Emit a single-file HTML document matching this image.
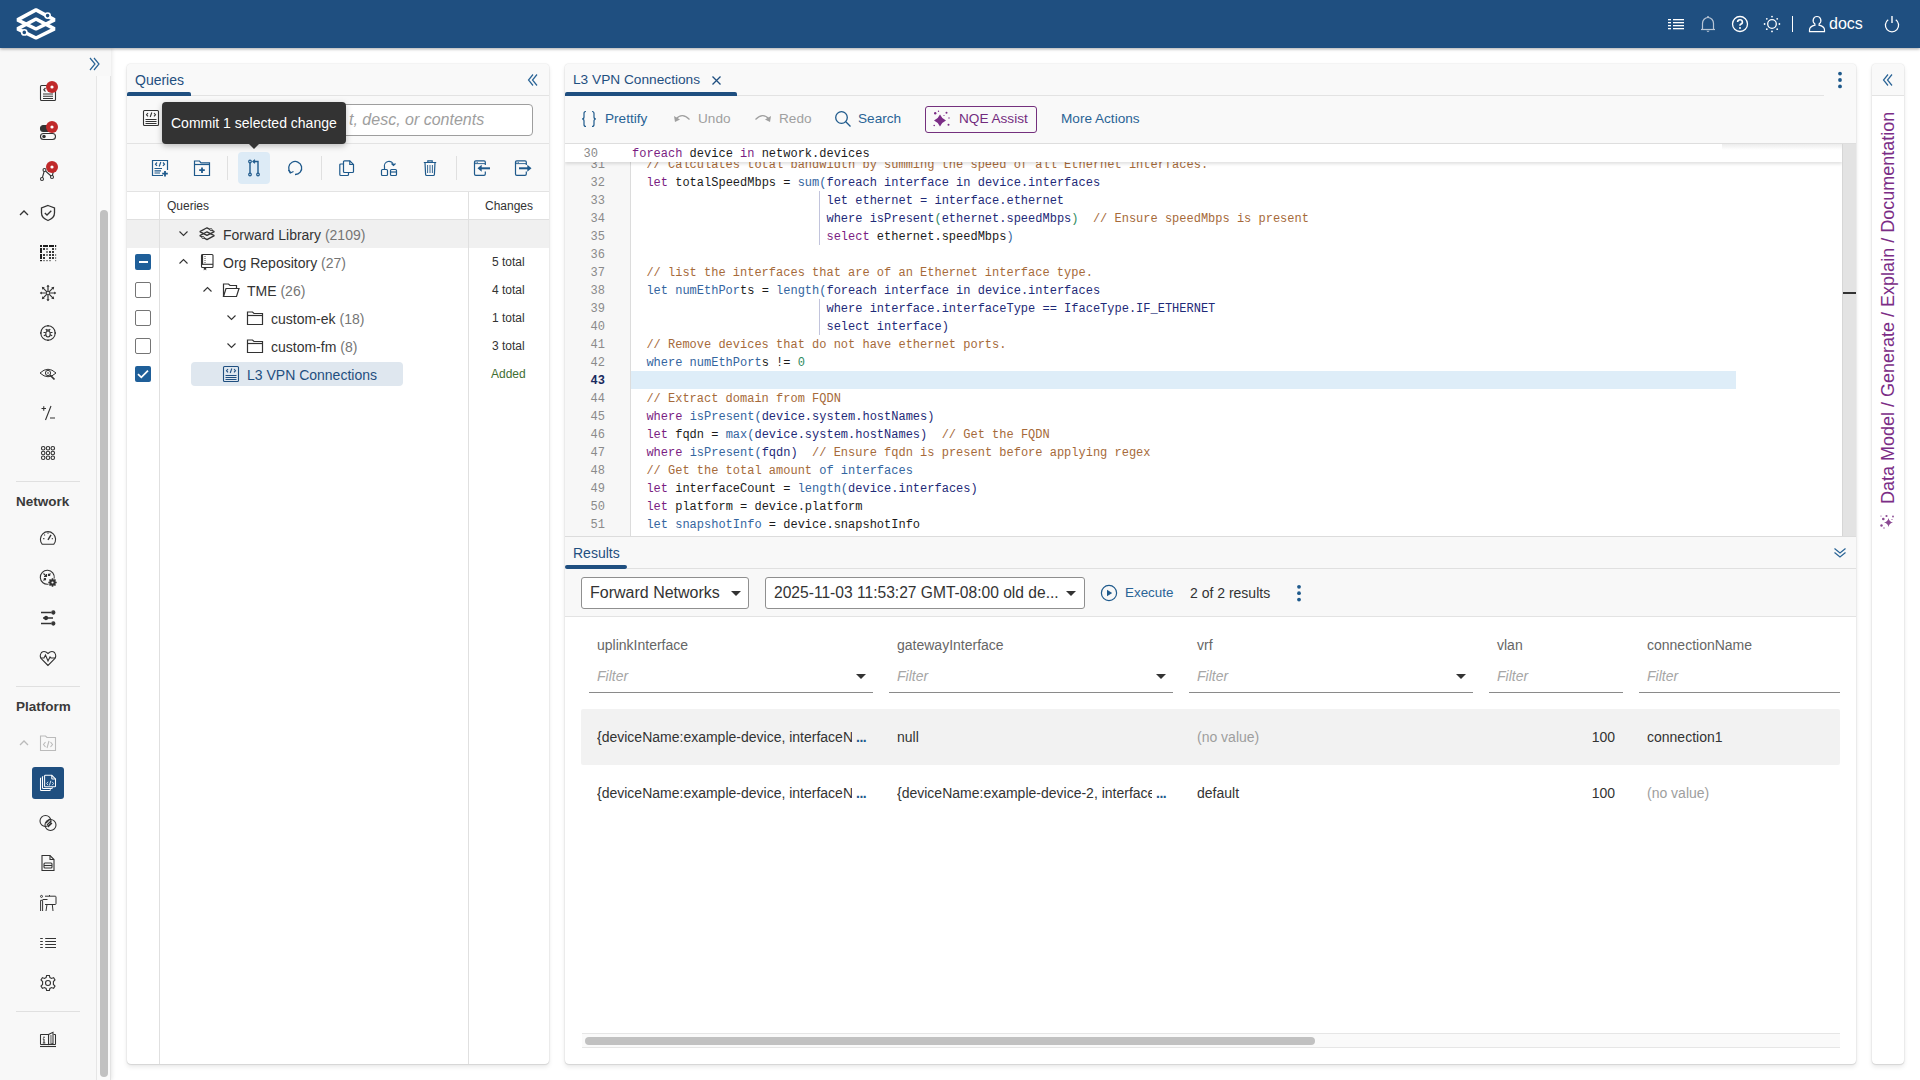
<!DOCTYPE html>
<html><head><meta charset="utf-8">
<style>
*{box-sizing:border-box;margin:0;padding:0}
html,body{width:1920px;height:1080px;overflow:hidden;background:#fff;font-family:"Liberation Sans",sans-serif;color:#333}
.abs{position:absolute}
svg{display:block}
#hdr{position:absolute;left:0;top:0;width:1920px;height:48px;background:#1f4f80;box-shadow:0 1px 3px rgba(0,0,0,.35);z-index:5}
#side{position:absolute;left:0;top:48px;width:111px;height:1032px;background:#f8f8f8;box-shadow:1px 0 4px rgba(0,0,0,.10)}
.panel{position:absolute;background:#fff;border-radius:4px;box-shadow:0 0 1.5px rgba(0,0,0,.22),0 1px 1px rgba(0,0,0,.06),0 3px 5px rgba(0,0,0,.09);overflow:hidden}
.tabtxt{position:absolute;font-size:14px;color:#1f4f80;line-height:16px}
.ind{position:absolute;height:4px;background:#1f4f80;border-radius:2px 2px 0 0}
.hline{position:absolute;height:1px;background:#e0e0e0}
.vline{position:absolute;width:1px;background:#e0e0e0}
.code{font-family:"Liberation Mono",monospace;font-size:12px;line-height:18px;white-space:pre;color:#1b1b1b;margin-top:1px}
.k{color:#7a1d82}.v{color:#1e2a78}.c{color:#a66a3a}.n{color:#2e8a5e}.m{color:#3465a0}
</style></head><body>

<!-- HEADER -->
<div id="hdr">
  <svg class="abs" style="left:14px;top:6px" width="44" height="36" viewBox="14 6 44 36">
    <g fill="none" stroke="#fff" stroke-width="3.6" stroke-linejoin="bevel">
      <path d="M17.5 19.8 L36 9.8 L54.5 19.8 L36 29 Z"/>
      <path d="M17.5 28.8 L36 19 L54.5 28.8 L36 38 Z"/>
    </g>
    <circle cx="47.6" cy="15.6" r="2.6" fill="#1f4f80" stroke="#fff" stroke-width="1.6"/>
    <circle cx="24.3" cy="32.4" r="2.6" fill="#1f4f80" stroke="#fff" stroke-width="1.6"/>
  </svg>

  <!-- list icon -->
  <svg class="abs" style="left:1667px;top:18px" width="18" height="12" viewBox="0 0 18 12">
    <g fill="#fff"><rect x="1" y="1" width="3" height="1.3"/><rect x="6" y="1" width="11" height="1.3"/>
    <rect x="1" y="4" width="3" height="1.3"/><rect x="6" y="4" width="11" height="1.3"/>
    <rect x="1" y="7" width="3" height="1.3"/><rect x="6" y="7" width="11" height="1.3"/>
    <rect x="1" y="10" width="3" height="1.3"/><rect x="6" y="10" width="11" height="1.3"/></g>
  </svg>
  <!-- bell -->
  <svg class="abs" style="left:1700px;top:15px" width="16" height="18" viewBox="0 0 16 18">
    <g fill="none" stroke="#b9c6d6" stroke-width="1.2"><path d="M2.5 14.5 V8.5 A5.5 6 0 0 1 13.5 8.5 V14.5"/><path d="M1 14.5 H15"/></g>
    <circle cx="8" cy="2" r="1" fill="#b9c6d6"/><path d="M6.3 15.8 H9.7 L8 17.2 Z" fill="#b9c6d6"/>
  </svg>
  <!-- help -->
  <svg class="abs" style="left:1731px;top:15px" width="18" height="18" viewBox="0 0 18 18">
    <circle cx="9" cy="9" r="7.5" fill="none" stroke="#fff" stroke-width="1.3"/>
    <path d="M6.6 7 A2.4 2.3 0 1 1 9.4 9.3 Q9 9.6 9 10.8" fill="none" stroke="#fff" stroke-width="1.6"/>
    <circle cx="9" cy="12.9" r="1" fill="#fff"/>
  </svg>
  <!-- sun -->
  <svg class="abs" style="left:1763px;top:15px" width="18" height="18" viewBox="0 0 18 18">
    <circle cx="9" cy="9" r="4.3" fill="none" stroke="#fff" stroke-width="1.3"/>
    <g fill="#fff"><circle cx="9" cy="1.6" r="0.9"/><circle cx="9" cy="16.4" r="0.9"/><circle cx="1.6" cy="9" r="0.9"/><circle cx="16.4" cy="9" r="0.9"/>
    <circle cx="3.8" cy="3.8" r="0.9"/><circle cx="14.2" cy="3.8" r="0.9"/><circle cx="3.8" cy="14.2" r="0.9"/><circle cx="14.2" cy="14.2" r="0.9"/></g>
  </svg>
  <div class="abs" style="left:1792px;top:16px;width:1px;height:16px;background:#fff"></div>
  <!-- user -->
  <svg class="abs" style="left:1808px;top:15px" width="18" height="18" viewBox="0 0 18 18">
    <path d="M9 1.5 A3.8 4 0 0 1 11.2 8.8 L11 10.2 Q16.5 11.5 16.5 15 V16.6 H1.5 V15 Q1.5 11.5 7 10.2 L6.8 8.8 A3.8 4 0 0 1 9 1.5 Z" fill="none" stroke="#fff" stroke-width="1.2"/>
  </svg>
  <div class="abs" style="left:1829px;top:14px;font-size:16px;line-height:19px;color:#fff">docs</div>
  <!-- power -->
  <svg class="abs" style="left:1883px;top:15px" width="18" height="18" viewBox="0 0 18 18">
    <path d="M5.2 4.8 A6.6 6.6 0 1 0 12.8 4.8" fill="none" stroke="#fff" stroke-width="1.3"/>
    <rect x="8.3" y="1" width="1.4" height="7" fill="#fff"/>
  </svg>
</div>

<!-- SIDEBAR -->
<div id="side"></div>
<div id="sideicons">
<svg class="abs" style="left:88px;top:56px" width="14" height="16" viewBox="0 0 14 16"><g fill="none" stroke="#2a6496" stroke-width="1.2"><path d="M2 2 L7 8 L2 14"/><path d="M6 2 L11 8 L6 14"/></g></svg>
<div class="abs" style="left:96px;top:76px;width:15px;height:1004px;background:#fafafa;border-left:1px solid #e6e6e6;border-right:1px solid #e3e3e3"></div>
<div class="abs" style="left:100px;top:210px;width:8px;height:867px;background:#c1c1c1;border-radius:4px"></div>
<svg class="abs" style="left:39px;top:84px" width="18" height="18" viewBox="0 0 18 18"><g fill="none" stroke="#333" stroke-width="1.1"><rect x="1.5" y="1.5" width="15" height="15" rx="1"/><path d="M4 10 H14 M4 12.3 H14 M4 14.5 H14"/><path d="M6.5 4 L4.8 5.8 L6.5 7.5"/></g></svg>
<svg class="abs" style="left:45px;top:80px" width="14" height="14" viewBox="0 0 14 14"><circle cx="7" cy="7" r="6" fill="#c0292a"/><circle cx="7" cy="7" r="1.6" fill="#fff"/></svg>
<svg class="abs" style="left:39px;top:124px" width="18" height="18" viewBox="0 0 18 18"><g fill="none" stroke="#333" stroke-width="1.1"><rect x="1.5" y="9.5" width="15" height="6" rx="3"/><circle cx="5" cy="12.5" r="1.2" fill="#333"/><rect x="1.5" y="1.5" width="15" height="6" rx="3" fill="#333"/></g></svg>
<svg class="abs" style="left:45px;top:120px" width="14" height="14" viewBox="0 0 14 14"><circle cx="7" cy="7" r="6" fill="#c0292a"/><circle cx="7" cy="7" r="1.6" fill="#fff"/></svg>
<svg class="abs" style="left:39px;top:164px" width="18" height="18" viewBox="0 0 18 18"><g fill="none" stroke="#333" stroke-width="1.1"><path d="M3 15 L5.5 6 L13 13 L15 5"/><circle cx="3" cy="15" r="1.5" fill="#fff"/><circle cx="5.5" cy="6" r="1.5" fill="#fff"/><circle cx="13" cy="13" r="1.5" fill="#fff"/></g></svg>
<svg class="abs" style="left:45px;top:160px" width="14" height="14" viewBox="0 0 14 14"><circle cx="7" cy="7" r="6" fill="#c0292a"/><circle cx="7" cy="7" r="1.6" fill="#fff"/></svg>
<svg class="abs" style="left:18px;top:208px" width="12" height="10" viewBox="0 0 12 10"><path d="M2 7 L6 3 L10 7" fill="none" stroke="#333" stroke-width="1.3"/></svg>
<svg class="abs" style="left:39px;top:204px" width="18" height="18" viewBox="0 0 18 18"><g fill="none" stroke="#333" stroke-width="1.1"><path d="M9 1.5 L15.5 4 V9 Q15.5 14 9 16.5 Q2.5 14 2.5 9 V4 Z" stroke-width="1.3"/><path d="M5.8 9 L8 11 L12.3 6.8" stroke-width="1.3"/></g></svg>
<svg class="abs" style="left:39px;top:244px" width="18" height="18" viewBox="0 0 18 18"><rect x="1" y="1" width="2" height="2" fill="#1e1e1e"/><rect x="4" y="1" width="5" height="2" fill="#1e1e1e"/><rect x="10" y="1" width="5" height="2" fill="#1e1e1e"/><rect x="16" y="1" width="1.2000000000000028" height="2" fill="#1e1e1e"/><rect x="1" y="4" width="2" height="5" fill="#1e1e1e"/><rect x="1" y="10" width="2" height="5" fill="#1e1e1e"/><rect x="1" y="16" width="2" height="1.1999999999999886" fill="#1e1e1e"/><rect x="4" y="4" width="2" height="2" fill="#3a3a3a"/><rect x="7" y="4" width="2" height="2" fill="#888"/><rect x="13" y="4" width="2" height="2" fill="#3a3a3a"/><rect x="16" y="4" width="1.2000000000000028" height="2" fill="#888"/><rect x="7" y="7" width="2" height="2" fill="#888"/><rect x="10" y="7" width="2" height="2" fill="#3a3a3a"/><rect x="13" y="7" width="2" height="2" fill="#3a3a3a"/><rect x="4" y="10" width="2" height="2" fill="#3a3a3a"/><rect x="7" y="10" width="2" height="2" fill="#888"/><rect x="10" y="10" width="2" height="2" fill="#3a3a3a"/><rect x="13" y="10" width="2" height="2" fill="#3a3a3a"/><rect x="16" y="10" width="1.2000000000000028" height="2" fill="#888"/><rect x="4" y="13" width="2" height="2" fill="#3a3a3a"/><rect x="10" y="13" width="2" height="2" fill="#3a3a3a"/><rect x="13" y="13" width="2" height="2" fill="#3a3a3a"/><rect x="16" y="13" width="1.2000000000000028" height="2" fill="#888"/><rect x="4" y="16" width="2" height="1.1999999999999886" fill="#888"/><rect x="7" y="16" width="2" height="1.1999999999999886" fill="#888"/><rect x="10" y="16" width="2" height="1.1999999999999886" fill="#888"/><rect x="16" y="16" width="1.2000000000000028" height="1.1999999999999886" fill="#888"/></svg>
<svg class="abs" style="left:39px;top:284px" width="18" height="18" viewBox="0 0 18 18"><g fill="none" stroke="#333" stroke-width="1.2"><path d="M9 1.5 V16.5 M1.5 9 H16.5 M3.7 3.7 L14.3 14.3 M14.3 3.7 L3.7 14.3"/></g><g fill="#333"><path d="M9 0.8 L10.6 2.8 H7.4 Z M9 17.2 L10.6 15.2 H7.4 Z M0.8 9 L2.8 10.6 V7.4 Z M17.2 9 L15.2 10.6 V7.4 Z"/><path d="M2.8 2.8 L5.8 3.4 L3.4 5.8 Z M15.2 2.8 L12.2 3.4 L14.6 5.8 Z M2.8 15.2 L5.8 14.6 L3.4 12.2 Z M15.2 15.2 L12.2 14.6 L14.6 12.2 Z"/></g><circle cx="9" cy="9" r="1.6" fill="#f8f8f8" stroke="#333" stroke-width="0.8"/></svg>
<svg class="abs" style="left:39px;top:324px" width="18" height="18" viewBox="0 0 18 18"><g fill="none" stroke="#333" stroke-width="1.1"><circle cx="9" cy="9" r="7.2"/><path d="M9 1 V2.5 M9 15.5 V17 M1 9 H2.5 M15.5 9 H17" stroke-width="1.5"/><ellipse cx="9" cy="10" rx="2.2" ry="3"/><path d="M7.5 6.8 Q9 5 10.5 6.8 M6.8 5 L7.8 6.3 M11.2 5 L10.2 6.3 M4.5 8.5 H6.8 M11.2 8.5 H13.5 M4.8 11.8 L6.9 10.8 M13.2 11.8 L11.1 10.8"/></g></svg>
<svg class="abs" style="left:39px;top:364px" width="18" height="18" viewBox="0 0 18 18"><g fill="none" stroke="#333" stroke-width="1.1"><path d="M1 9 Q9 1.5 17 9 Q9 16.5 1 9 Z" stroke-width="1"/><circle cx="9" cy="9" r="2.6" stroke-width="1"/><circle cx="9" cy="9" r="1.1" fill="#888" stroke="none"/><path d="M11 11 L15.5 15.5" stroke-width="1.7"/></g></svg>
<svg class="abs" style="left:39px;top:404px" width="18" height="18" viewBox="0 0 18 18"><g fill="none" stroke="#333" stroke-width="1.1"><path d="M2.5 4.5 H7 M4.75 2.2 V6.8 M12 2 L6.5 16 M11 14 H16" stroke-width="1.1"/></g></svg>
<svg class="abs" style="left:39px;top:444px" width="18" height="18" viewBox="0 0 18 18"><g fill="none" stroke="#333" stroke-width="1.1"><circle cx="4.2" cy="4.2" r="1.75"/><circle cx="4.2" cy="9" r="1.75"/><circle cx="4.2" cy="13.8" r="1.75"/><circle cx="9" cy="4.2" r="1.75"/><circle cx="9" cy="9" r="1.75"/><circle cx="9" cy="13.8" r="1.75"/><circle cx="13.8" cy="4.2" r="1.75"/><circle cx="13.8" cy="9" r="1.75"/><circle cx="13.8" cy="13.8" r="1.75"/></g></svg>
<div class="abs" style="left:16px;top:481px;width:64px;height:1px;background:#e0e0e0"></div>
<div class="abs" style="left:16px;top:494px;font-size:13.5px;font-weight:bold;line-height:16px;color:#3a3a3a">Network</div>
<svg class="abs" style="left:39px;top:529px" width="18" height="18" viewBox="0 0 18 18"><g fill="none" stroke="#333" stroke-width="1.1"><path d="M3.3 15.3 A7.6 7.6 0 1 1 14.7 15.3 Z"/><path d="M9 10.8 L12 5.8" stroke-width="1.4"/><path d="M4.2 9.6 H5.4 M9 3.6 V4.8 M5.2 5.6 L6 6.4 M12.8 9.6 H13.8"/></g></svg>
<svg class="abs" style="left:39px;top:569px" width="18" height="18" viewBox="0 0 18 18"><g fill="none" stroke="#333" stroke-width="1.1"><path d="M15.2 9.5 A7 7 0 1 0 9.5 15.2"/><path d="M4.5 4.5 L7.5 7.5 M7.5 5 V7.5 H5 M11.5 4.5 L9.5 6.5 M9.5 4.8 V6.5 H11.2 M4.5 11.5 L6.5 9.5 M4.8 9.5 H6.5 V11.2"/></g><circle cx="13.5" cy="13.5" r="3.2" fill="#333"/><g stroke="#333" stroke-width="1.6"><path d="M13.5 9.3 V17.7 M9.3 13.5 H17.7 M10.5 10.5 L16.5 16.5 M16.5 10.5 L10.5 16.5"/></g><circle cx="13.5" cy="13.5" r="1.1" fill="#f8f8f8"/></svg>
<svg class="abs" style="left:39px;top:609px" width="18" height="18" viewBox="0 0 18 18"><g fill="none" stroke="#333" stroke-width="1.1"><path d="M2 3.5 H12 M4 9 H14 M2 14.5 H12" stroke-width="1.3"/><circle cx="14.3" cy="3.5" r="1.6" fill="#333"/><circle cx="7" cy="9" r="1.6" fill="#333"/><circle cx="14.3" cy="14.5" r="1.6" fill="#333"/></g></svg>
<svg class="abs" style="left:39px;top:649px" width="18" height="18" viewBox="0 0 18 18"><g fill="none" stroke="#333" stroke-width="1.1"><path d="M9 16.5 L2.5 10 Q0 7 2.5 3.5 Q5.5 1 9 4.5 Q12.5 1 15.5 3.5 Q18 7 15.5 10 Z"/><path d="M1.5 9 H5 L6.5 6 L9 12 L11 8 L12 9 H16.5"/></g></svg>
<div class="abs" style="left:16px;top:686px;width:64px;height:1px;background:#e0e0e0"></div>
<div class="abs" style="left:16px;top:699px;font-size:13.5px;font-weight:bold;line-height:16px;color:#3a3a3a">Platform</div>
<svg class="abs" style="left:18px;top:738px" width="12" height="10" viewBox="0 0 12 10"><path d="M2 7 L6 3 L10 7" fill="none" stroke="#bbb" stroke-width="1.3"/></svg>
<svg class="abs" style="left:39px;top:734px" width="18" height="18" viewBox="0 0 18 18"><g fill="none" stroke="#bbb" stroke-width="1.1"><path d="M1.5 2 H6.5 L8 3.5 H16.5 V16.5 H1.5 Z"/><path d="M6.5 8 L4.5 10.5 L6.5 13 M11.5 8 L13.5 10.5 L11.5 13 M10 7 L8 14"/></g></svg>
<div class="abs" style="left:32px;top:767px;width:32px;height:32px;background:#1f4f80;border-radius:3px"></div>
<svg class="abs" style="left:39px;top:774px" width="18" height="18" viewBox="0 0 18 18"><g fill="none" stroke="#fff" stroke-width="1.05"><path d="M2.2 4 Q1.5 4 1.5 4.8 V15.8 Q1.5 16.5 2.2 16.5 H10.5 Q11.3 16.5 11.3 15.8 V15.2"/><path d="M4.2 2.5 Q3.5 2.5 3.5 3.3 V13.8 Q3.5 14.5 4.2 14.5 H12.5 Q13.3 14.5 13.3 13.8 V13.2"/></g><path d="M6.3 1.3 Q5.6 1.3 5.6 2 V12 Q5.6 12.7 6.3 12.7 H15.8 Q16.5 12.7 16.5 12 V5 L12.8 1.3 Z" fill="#1f4f80" stroke="#fff" stroke-width="1.05"/><path d="M12.8 1.3 V4.5 Q12.8 5 13.3 5 H16.5" fill="none" stroke="#fff" stroke-width="1.05"/><path d="M9 7.8 L7.7 9.5 L9 11.2 M13.2 7.8 L14.5 9.5 L13.2 11.2 M11.8 6.8 L10.4 11.5" fill="none" stroke="#cfe0f0" stroke-width="1"/></svg>
<svg class="abs" style="left:39px;top:814px" width="18" height="18" viewBox="0 0 18 18"><g fill="none" stroke="#333" stroke-width="1.1"><circle cx="6.5" cy="7" r="5.5"/><circle cx="11.5" cy="11" r="5.5"/><path d="M7 9 L11 5 M8 11 L12 7 M9 13 L13 9"/></g></svg>
<svg class="abs" style="left:39px;top:854px" width="18" height="18" viewBox="0 0 18 18"><g fill="none" stroke="#333" stroke-width="1.1"><path d="M3 1.5 H11 L15 5.5 V16.5 H3 Z"/><path d="M11 1.5 V5.5 H15"/><rect x="5" y="9" width="8" height="5" rx="1"/><path d="M5 11.5 H13"/></g></svg>
<svg class="abs" style="left:39px;top:894px" width="18" height="18" viewBox="0 0 18 18"><g fill="none" stroke="#333" stroke-width="1"><circle cx="2.5" cy="2.4" r="1"/><path d="M1.6 17 V6.3 H3.6 V17 M3.6 5.5 H8.5"/><path d="M6 2.2 H16.2 Q17 2.2 17 3 V9.8 Q17 10.5 16.2 10.5 H6 M10.5 1 V2.2"/><path d="M8 10.5 L7 17 M13.3 10.5 L14 17"/></g></svg>
<svg class="abs" style="left:39px;top:934px" width="18" height="18" viewBox="0 0 18 18"><g fill="none" stroke="#333" stroke-width="1.05"><path d="M1.2 4.5 H3.8 M6.2 4.5 H17 M1.2 7.5 H3.8 M6.2 7.5 H17 M1.2 10.5 H3.8 M6.2 10.5 H17 M1.2 13.5 H3.8 M6.2 13.5 H17"/></g></svg>
<svg class="abs" style="left:39px;top:974px" width="18" height="18" viewBox="0 0 18 18"><g fill="none" stroke="#333" stroke-width="1.1"><path d="M7.6 1.5 H10.4 L10.9 3.6 L12.6 4.5 L14.6 3.6 L16 6 L14.4 7.5 V10.5 L16 12 L14.6 14.4 L12.6 13.5 L10.9 14.4 L10.4 16.5 H7.6 L7.1 14.4 L5.4 13.5 L3.4 14.4 L2 12 L3.6 10.5 V7.5 L2 6 L3.4 3.6 L5.4 4.5 L7.1 3.6 Z"/><circle cx="9" cy="9" r="2.5"/></g></svg>
<div class="abs" style="left:16px;top:1011px;width:64px;height:1px;background:#e0e0e0"></div>
<svg class="abs" style="left:39px;top:1031px" width="18" height="18" viewBox="0 0 18 18"><g fill="none" stroke="#333" stroke-width="1.05"><path d="M9.5 3.5 H2 Q1.5 3.5 1.5 4 V13 Q1.5 13.5 2 13.5 H16 Q16.5 13.5 16.5 13 V4 Q16.5 3.5 16 3.5 H14.5"/><path d="M9.5 3.5 L14 1.3 V12.5 L9.5 13.5 Z"/><path d="M10.8 5 H12.8 M10.8 7 H12.8 M10.8 9 H12.8 M10.8 11 H12.8" stroke-width="0.9"/><path d="M5 8 V12 M3.8 12 H6.3 M3.8 8 H5"/><path d="M1 15.5 H17" stroke-width="1.1"/></g><circle cx="5" cy="6.2" r="0.8" fill="#333"/></svg>
</div>


<!-- QUERIES PANEL -->
<div id="qpanel">
<div class="panel" style="left:127px;top:64px;width:422px;height:1000px;background:#fff"></div>
<div class="abs" style="left:127px;top:64px;width:422px;height:128px;background:#f9f9f9;border-radius:4px 4px 0 0"></div>
<div class="tabtxt" style="left:135px;top:72px">Queries</div>
<div class="ind" style="left:127px;top:92px;width:64px"></div>
<div class="hline" style="left:191px;top:95px;width:358px;background:#e3e3e3"></div>
<svg class="abs" style="left:526px;top:73px" width="14" height="14" viewBox="0 0 14 14"><g fill="none" stroke="#2a6496" stroke-width="1.2"><path d="M7 1.5 L2.5 7 L7 12.5"/><path d="M11 1.5 L6.5 7 L11 12.5"/></g></svg>
<svg class="abs" style="left:142px;top:109px" width="18" height="18" viewBox="0 0 18 18"><g fill="none" stroke="#333" stroke-width="1.1"><rect x="1.5" y="1.5" width="15" height="15" rx="1"/><path d="M3.5 10.5 H14.5 M3.5 12.5 H14.5 M3.5 14.5 H14.5"/><path d="M6 4 L4.5 5.7 L6 7.4 M12 4 L13.5 5.7 L12 7.4 M9.8 3.5 L8.2 8"/></g></svg>
<div class="abs" style="left:167px;top:104px;width:366px;height:32px;background:#fff;border:1px solid #9e9e9e;border-radius:4px"></div>
<div class="abs" style="left:349px;top:110px;font-size:16px;font-style:italic;color:#9e9e9e;line-height:19px">t, desc, or contents</div>
<div class="hline" style="left:127px;top:143px;width:422px;background:#e3e3e3"></div>
<div class="abs" style="left:238px;top:152px;width:32px;height:32px;background:#ddebf6;border-radius:4px"></div>
<svg class="abs" style="left:151px;top:159px" width="18" height="18" viewBox="0 0 18 18"><g fill="none" stroke="#1f5a8c" stroke-width="1.2"><path d="M12 16.5 H1.5 V1.5 H16.5 V11"/><path d="M3.5 9.5 H11 M3.5 11.8 H10 M3.5 14 H9"/><path d="M6 3.5 L4.5 5.2 L6 6.9 M12 3.5 L13.5 5.2 L12 6.9 M9.8 3 L8.2 7.5"/><path d="M14 12 V17.5 M11.2 14.7 H16.8" stroke-width="1.8"/></g></svg>
<svg class="abs" style="left:193px;top:159px" width="18" height="18" viewBox="0 0 18 18"><g fill="none" stroke="#1f5a8c" stroke-width="1.2"><path d="M1.5 2 H6.5 L8 3.8 H16.5 V16.5 H1.5 Z"/><path d="M1.5 5.5 H16.5"/><path d="M9 8.5 V14 M6.2 11.2 H11.8" stroke-width="1.8"/></g></svg>
<div class="abs" style="left:227px;top:156px;width:1px;height:24px;background:#e0e0e0"></div>
<svg class="abs" style="left:245px;top:159px" width="18" height="18" viewBox="0 0 18 18"><g fill="none" stroke="#1f5a8c" stroke-width="1.2"><circle cx="5" cy="15.5" r="1.3"/><circle cx="13" cy="15.5" r="1.3"/><circle cx="5" cy="2.5" r="1.3"/><path d="M5 3.8 V14.2 M13 14.2 V2.5 H8.5" stroke-width="1.4"/><path d="M10 0.8 L8 2.5 L10 4.2" stroke-width="1.3"/></g></svg>
<svg class="abs" style="left:286px;top:159px" width="18" height="18" viewBox="0 0 18 18"><g fill="none" stroke="#1f5a8c" stroke-width="1.2"><path d="M4.5 13.5 A6.5 6.5 0 1 1 9 15.5" stroke-width="1.3"/><path d="M2.5 11 L4.3 14 L7.5 12.5" stroke-width="1.3"/></g></svg>
<div class="abs" style="left:321px;top:156px;width:1px;height:24px;background:#e0e0e0"></div>
<svg class="abs" style="left:338px;top:159px" width="18" height="18" viewBox="0 0 18 18"><g fill="none" stroke="#1f5a8c" stroke-width="1.2"><path d="M5.5 5 H2.8 Q1.8 5 1.8 6 V15.5 Q1.8 16.5 2.8 16.5 H9.5 Q10.5 16.5 10.5 15.5 V13.5"/><path d="M5.5 2.8 Q5.5 1.8 6.5 1.8 H11.8 L15.5 5.5 V12.5 Q15.5 13.5 14.5 13.5 H6.5 Q5.5 13.5 5.5 12.5 Z"/><path d="M11.8 1.8 V5.5 H15.5"/></g></svg>
<svg class="abs" style="left:380px;top:159px" width="18" height="18" viewBox="0 0 18 18"><g fill="none" stroke="#1f5a8c" stroke-width="1.2"><rect x="1.5" y="10.5" width="6" height="6" rx="1"/><rect x="10.5" y="10.5" width="6" height="6" rx="1"/><path d="M4.5 10.5 V8 A4.5 4.5 0 0 1 13.5 6"/><path d="M11.5 4.5 L13.5 6.5 L15.5 4.5"/><path d="M10.5 13 H16.5"/></g></svg>
<svg class="abs" style="left:421px;top:159px" width="18" height="18" viewBox="0 0 18 18"><g fill="none" stroke="#1f5a8c" stroke-width="1.2"><path d="M2.8 3.5 H15.2 M6.8 3.5 V1.8 H11.2 V3.5"/><path d="M4 3.5 L4.6 15.5 Q4.7 16.5 5.7 16.5 H12.3 Q13.3 16.5 13.4 15.5 L14 3.5"/><path d="M6.6 6 V14 M9 6 V14 M11.4 6 V14" stroke-width="0.9"/></g></svg>
<div class="abs" style="left:456px;top:156px;width:1px;height:24px;background:#e0e0e0"></div>
<svg class="abs" style="left:473px;top:159px" width="18" height="18" viewBox="0 0 18 18"><g fill="none" stroke="#1f5a8c" stroke-width="1.2"><path d="M12.3 6 V3 Q12.3 1.8 11 1.8 H2.8 Q1.5 1.8 1.5 3 V15 Q1.5 16.3 2.8 16.3 H11 Q12.3 16.3 12.3 15 V12.5"/><path d="M1.5 4.6 H12.3" stroke-width="0.9"/><path d="M17 9.3 H8" stroke-width="2"/></g><path d="M4.5 9.3 L8.7 5.8 V12.8 Z" fill="#1f5a8c"/><circle cx="3" cy="3.2" r="0.5" fill="#1f5a8c"/><circle cx="4.5" cy="3.2" r="0.5" fill="#1f5a8c"/></svg>
<svg class="abs" style="left:514px;top:159px" width="18" height="18" viewBox="0 0 18 18"><g fill="none" stroke="#1f5a8c" stroke-width="1.2"><path d="M12.3 6 V3 Q12.3 1.8 11 1.8 H2.8 Q1.5 1.8 1.5 3 V15 Q1.5 16.3 2.8 16.3 H11 Q12.3 16.3 12.3 15 V12.5"/><path d="M1.5 4.6 H12.3" stroke-width="0.9"/><path d="M5 9.3 H14" stroke-width="2"/></g><path d="M17.5 9.3 L13.3 5.8 V12.8 Z" fill="#1f5a8c"/><circle cx="3" cy="3.2" r="0.5" fill="#1f5a8c"/><circle cx="4.5" cy="3.2" r="0.5" fill="#1f5a8c"/></svg>
<div class="hline" style="left:127px;top:191px;width:422px;background:#e3e3e3"></div>
<div class="vline" style="left:159px;top:192px;height:872px;background:#e0e0e0"></div>
<div class="vline" style="left:468px;top:192px;height:872px;background:#e0e0e0"></div>
<div class="abs" style="left:167px;top:199px;font-size:12px;color:#333;line-height:14px">Queries</div>
<div class="abs" style="left:485px;top:199px;font-size:12px;color:#333;line-height:14px">Changes</div>
<div class="hline" style="left:127px;top:219px;width:422px;background:#e0e0e0"></div>
<div class="abs" style="left:127px;top:220px;width:422px;height:28px;background:#f0f0f0"></div>
<div class="vline" style="left:159px;top:220px;height:28px;background:#e0e0e0"></div><div class="vline" style="left:468px;top:220px;height:28px;background:#e0e0e0"></div>
<svg class="abs" style="left:178px;top:229px" width="11" height="9" viewBox="0 0 11 9"><path d="M1.5 2.5 L5.5 6.5 L9.5 2.5" fill="none" stroke="#333" stroke-width="1.1"/></svg>
<svg class="abs" style="left:198px;top:226px" width="18" height="16" viewBox="0 0 18 16"><g fill="none" stroke="#333" stroke-width="1.3" stroke-linejoin="bevel"><path d="M1.8 5.6 L9 1.8 L16.3 5.6 L9 9.4 Z"/><path d="M1.8 9.6 L9 5.8 L16.3 9.6 L9 13.6 Z"/></g><circle cx="13" cy="3.6" r="1.1" fill="#f0f0f0" stroke="#333" stroke-width="0.8"/><circle cx="5" cy="11.5" r="1.1" fill="#f0f0f0" stroke="#333" stroke-width="0.8"/></svg>
<div class="abs" style="left:223px;top:227px;font-size:14px;line-height:16px;color:#333;white-space:nowrap">Forward Library <span style="color:#757575">(2109)</span></div>
<div class="abs" style="left:135px;top:254px;width:16px;height:16px;background:#1f5f99;border-radius:2px"><div class="abs" style="left:3.5px;top:7px;width:9px;height:2px;background:#fff"></div></div>
<svg class="abs" style="left:178px;top:257px" width="11" height="9" viewBox="0 0 11 9"><path d="M1.5 6.5 L5.5 2.5 L9.5 6.5" fill="none" stroke="#333" stroke-width="1.1"/></svg>
<svg class="abs" style="left:198px;top:253px" width="18" height="18" viewBox="0 0 18 18"><g fill="none" stroke="#333" stroke-width="1.1"><rect x="3.5" y="1.5" width="11.5" height="13" rx="1"/><path d="M3.5 11.3 H15"/></g><rect x="3.5" y="1.5" width="1.6" height="10" fill="#333"/><g fill="#333"><circle cx="7" cy="3.5" r="0.55"/><circle cx="7" cy="5.5" r="0.55"/><circle cx="7" cy="7.5" r="0.55"/><circle cx="7" cy="9.5" r="0.55"/></g><path d="M5.8 14 V17.5 L7 16.3 L8.2 17.5 V14 Z" fill="#333"/></svg>
<div class="abs" style="left:223px;top:255px;font-size:14px;line-height:16px;color:#333;white-space:nowrap">Org Repository <span style="color:#757575">(27)</span></div>
<div class="abs" style="left:492px;top:255px;font-size:12px;line-height:14px;color:#333">5 total</div>
<div class="abs" style="left:135px;top:282px;width:16px;height:16px;border:1px solid #757575;border-radius:2px;background:#fff"></div>
<svg class="abs" style="left:202px;top:285px" width="11" height="9" viewBox="0 0 11 9"><path d="M1.5 6.5 L5.5 2.5 L9.5 6.5" fill="none" stroke="#333" stroke-width="1.1"/></svg>
<svg class="abs" style="left:222px;top:281px" width="18" height="18" viewBox="0 0 18 18"><g fill="none" stroke="#333" stroke-width="1.2"><path d="M1.5 15.5 V3 H6.5 L8 4.5 H14.5 V7"/><path d="M1.5 15.5 L4 7.5 H17 L14.5 15.5 Z"/></g></svg>
<div class="abs" style="left:247px;top:283px;font-size:14px;line-height:16px;color:#333;white-space:nowrap">TME <span style="color:#757575">(26)</span></div>
<div class="abs" style="left:492px;top:283px;font-size:12px;line-height:14px;color:#333">4 total</div>
<div class="abs" style="left:135px;top:310px;width:16px;height:16px;border:1px solid #757575;border-radius:2px;background:#fff"></div>
<svg class="abs" style="left:226px;top:313px" width="11" height="9" viewBox="0 0 11 9"><path d="M1.5 2.5 L5.5 6.5 L9.5 2.5" fill="none" stroke="#333" stroke-width="1.1"/></svg>
<svg class="abs" style="left:246px;top:309px" width="18" height="18" viewBox="0 0 18 18"><g fill="none" stroke="#333" stroke-width="1.2"><path d="M1.5 3 H6.5 L8 4.5 H16.5 V15.5 H1.5 Z"/><path d="M1.5 6.5 H16.5"/></g></svg>
<div class="abs" style="left:271px;top:311px;font-size:14px;line-height:16px;color:#333;white-space:nowrap">custom-ek <span style="color:#757575">(18)</span></div>
<div class="abs" style="left:492px;top:311px;font-size:12px;line-height:14px;color:#333">1 total</div>
<div class="abs" style="left:135px;top:338px;width:16px;height:16px;border:1px solid #757575;border-radius:2px;background:#fff"></div>
<svg class="abs" style="left:226px;top:341px" width="11" height="9" viewBox="0 0 11 9"><path d="M1.5 2.5 L5.5 6.5 L9.5 2.5" fill="none" stroke="#333" stroke-width="1.1"/></svg>
<svg class="abs" style="left:246px;top:337px" width="18" height="18" viewBox="0 0 18 18"><g fill="none" stroke="#333" stroke-width="1.2"><path d="M1.5 3 H6.5 L8 4.5 H16.5 V15.5 H1.5 Z"/><path d="M1.5 6.5 H16.5"/></g></svg>
<div class="abs" style="left:271px;top:339px;font-size:14px;line-height:16px;color:#333;white-space:nowrap">custom-fm <span style="color:#757575">(8)</span></div>
<div class="abs" style="left:492px;top:339px;font-size:12px;line-height:14px;color:#333">3 total</div>
<div class="abs" style="left:135px;top:366px;width:16px;height:16px;background:#1f5f99;border-radius:2px"><svg class="abs" style="left:0;top:0" width="16" height="16" viewBox="0 0 16 16"><path d="M3 8.2 L6.3 11.3 L13 4.7" fill="none" stroke="#fff" stroke-width="1.8"/></svg></div>
<div class="abs" style="left:191px;top:362px;width:212px;height:24px;background:#dfe7ef;border-radius:4px"></div>
<svg class="abs" style="left:222px;top:365px" width="18" height="18" viewBox="0 0 18 18"><g fill="none" stroke="#1f4f80" stroke-width="1.1"><rect x="1.5" y="1.5" width="15" height="15" rx="1"/><path d="M3.5 10.5 H14.5 M3.5 12.5 H14.5 M3.5 14.5 H14.5"/><path d="M6 4 L4.5 5.7 L6 7.4 M12 4 L13.5 5.7 L12 7.4 M9.8 3.5 L8.2 8"/></g></svg>
<div class="abs" style="left:247px;top:367px;font-size:14px;line-height:16px;color:#1f4f80;white-space:nowrap">L3 VPN Connections <span style="color:#757575"></span></div>
<div class="abs" style="left:491px;top:367px;font-size:12px;line-height:14px;color:#3f6e33">Added</div>
<div class="abs" style="left:162px;top:102px;width:184px;height:42px;background:#333;border-radius:4px;box-shadow:0 2px 6px rgba(0,0,0,.25)"></div>
<div class="abs" style="left:248px;top:143px;width:0;height:0;border-left:6px solid transparent;border-right:6px solid transparent;border-top:6px solid #333"></div>
<div class="abs" style="left:171px;top:115px;font-size:14px;line-height:16px;color:#fff;white-space:nowrap">Commit 1 selected change</div>
</div>


<!-- EDITOR PANEL -->
<div id="epanel">
<div class="panel" style="left:565px;top:64px;width:1291px;height:1000px;background:#fff"></div>
<div class="abs" style="left:565px;top:64px;width:1291px;height:80px;background:#f9f9f9;border-radius:4px 4px 0 0"></div>
<div class="abs" style="left:573px;top:72px;font-size:13.7px;line-height:16px;color:#1f4f80;white-space:nowrap">L3 VPN Connections</div>
<svg class="abs" style="left:711px;top:75px" width="11" height="11" viewBox="0 0 11 11"><path d="M1.5 1.5 L9.5 9.5 M9.5 1.5 L1.5 9.5" stroke="#1f4f80" stroke-width="1.3"/></svg>
<div class="ind" style="left:565px;top:92px;width:172px"></div>
<div class="hline" style="left:737px;top:95px;width:1087px;background:#e3e3e3"></div>
<svg class="abs" style="left:1835px;top:71px" width="10" height="18" viewBox="0 0 10 18"><g fill="#1f5a8c"><circle cx="5" cy="2.6" r="1.9"/><circle cx="5" cy="9" r="1.9"/><circle cx="5" cy="15.4" r="1.9"/></g></svg>
<svg class="abs" style="left:580px;top:110px" width="18" height="18" viewBox="0 0 18 18"><g fill="none" stroke="#1f5a8c" stroke-width="1.2"><path d="M6 1.5 Q4 1.5 4 3.5 V7 Q4 9 2 9 Q4 9 4 11 V14.5 Q4 16.5 6 16.5"/><path d="M12 1.5 Q14 1.5 14 3.5 V7 Q14 9 16 9 Q14 9 14 11 V14.5 Q14 16.5 12 16.5"/></g></svg>
<div class="abs" style="left:605px;top:111px;font-size:13.6px;line-height:16px;color:#2a6496">Prettify</div>
<svg class="abs" style="left:673px;top:111px" width="18" height="14" viewBox="0 0 18 14"><path d="M3 8 Q9 1 16.5 8.5" fill="none" stroke="#a0a0a0" stroke-width="1.2"/><path d="M1 5 L2 11 L7 8.5 Z" fill="#a0a0a0"/></svg>
<div class="abs" style="left:698px;top:111px;font-size:13.6px;line-height:16px;color:#a0a0a0">Undo</div>
<svg class="abs" style="left:754px;top:111px" width="18" height="14" viewBox="0 0 18 14"><path d="M15 8 Q9 1 1.5 8.5" fill="none" stroke="#a0a0a0" stroke-width="1.2"/><path d="M17 5 L16 11 L11 8.5 Z" fill="#a0a0a0"/></svg>
<div class="abs" style="left:779px;top:111px;font-size:13.6px;line-height:16px;color:#a0a0a0">Redo</div>
<svg class="abs" style="left:834px;top:110px" width="18" height="18" viewBox="0 0 18 18"><g fill="none" stroke="#1f5a8c" stroke-width="1.3"><circle cx="7.5" cy="7.5" r="5.8"/><path d="M11.8 11.8 L16.5 16.5"/></g></svg>
<div class="abs" style="left:858px;top:111px;font-size:13.6px;line-height:16px;color:#2a6496">Search</div>
<div class="abs" style="left:925px;top:106px;width:112px;height:27px;border:1.3px solid #74307d;border-radius:3px"></div>
<svg class="abs" style="left:932px;top:110px" width="20" height="18" viewBox="0 0 20 18"><g fill="#7b2d86"><path d="M8 4.5 Q9.8 8.7 14 10.5 Q9.8 12.3 8 16.5 Q6.2 12.3 2 10.5 Q6.2 8.7 8 4.5 Z"/><circle cx="3.2" cy="3.2" r="1.2"/><circle cx="14.5" cy="2.8" r="1"/><circle cx="16.5" cy="14.8" r="1"/><circle cx="2.2" cy="15.5" r="0.8"/><circle cx="17" cy="8" r="0.7"/><circle cx="6.5" cy="1.2" r="0.7"/><circle cx="12" cy="5.5" r="0.6"/></g></svg>
<div class="abs" style="left:959px;top:111px;font-size:13.6px;line-height:16px;color:#722a7d">NQE Assist</div>
<div class="abs" style="left:1061px;top:111px;font-size:13.6px;line-height:16px;color:#2a6496">More Actions</div>
<div class="hline" style="left:565px;top:143px;width:1291px;background:#dedede"></div>
<div class="abs" style="left:565px;top:144px;width:66px;height:392px;background:#f7f7f7;border-right:1px solid #dcdcdc"></div>
<div class="abs" style="left:565px;top:144px;width:1277px;height:392px;overflow:hidden">
<div class="abs" style="left:-565px;top:-144px;width:1920px;height:1080px">
<div class="abs" style="left:631px;top:371px;width:1105px;height:18px;background:#deedf8"></div>
<div class="abs code" style="left:565px;top:155px;width:40px;text-align:right;color:#8a8a8a;">31</div>
<div class="abs code" style="left:632px;top:155px"><span class="c">  // Calculates total bandwidth by summing the speed of all Ethernet interfaces.</span></div>
<div class="abs code" style="left:565px;top:173px;width:40px;text-align:right;color:#8a8a8a;">32</div>
<div class="abs code" style="left:632px;top:173px"><span class="k">  let</span> totalSpeedMbps = <span class="m">sum(</span><span class="v">foreach interface in device.interfaces</span></div>
<div class="abs code" style="left:565px;top:191px;width:40px;text-align:right;color:#8a8a8a;">33</div>
<div class="abs code" style="left:632px;top:191px"><span class="v">                           let ethernet = interface.ethernet</span></div>
<div class="abs code" style="left:565px;top:209px;width:40px;text-align:right;color:#8a8a8a;">34</div>
<div class="abs code" style="left:632px;top:209px"><span class="v">                           where isPresent</span><span class="n">(</span><span class="v">ethernet.speedMbps</span><span class="n">)</span><span class="c">  // Ensure speedMbps is present</span></div>
<div class="abs code" style="left:565px;top:227px;width:40px;text-align:right;color:#8a8a8a;">35</div>
<div class="abs code" style="left:632px;top:227px"><span class="k">                           select</span> ethernet.speedMbps<span class="m">)</span></div>
<div class="abs code" style="left:565px;top:245px;width:40px;text-align:right;color:#8a8a8a;">36</div>
<div class="abs code" style="left:565px;top:263px;width:40px;text-align:right;color:#8a8a8a;">37</div>
<div class="abs code" style="left:632px;top:263px"><span class="c">  // list the interfaces that are of an Ethernet interface type.</span></div>
<div class="abs code" style="left:565px;top:281px;width:40px;text-align:right;color:#8a8a8a;">38</div>
<div class="abs code" style="left:632px;top:281px"><span class="m">  let numEthPor</span>ts = <span class="m">length(</span><span class="v">foreach interface in device.interfaces</span></div>
<div class="abs code" style="left:565px;top:299px;width:40px;text-align:right;color:#8a8a8a;">39</div>
<div class="abs code" style="left:632px;top:299px"><span class="v">                           where interface.interfaceType == IfaceType.IF_ETHERNET</span></div>
<div class="abs code" style="left:565px;top:317px;width:40px;text-align:right;color:#8a8a8a;">40</div>
<div class="abs code" style="left:632px;top:317px"><span class="v">                           select interface)</span></div>
<div class="abs code" style="left:565px;top:335px;width:40px;text-align:right;color:#8a8a8a;">41</div>
<div class="abs code" style="left:632px;top:335px"><span class="c">  // Remove devices that do not have ethernet ports.</span></div>
<div class="abs code" style="left:565px;top:353px;width:40px;text-align:right;color:#8a8a8a;">42</div>
<div class="abs code" style="left:632px;top:353px"><span class="m">  where numEthPort</span>s != <span class="n">0</span></div>
<div class="abs code" style="left:565px;top:371px;width:40px;text-align:right;color:#1a2a5e;font-weight:bold;">43</div>
<div class="abs code" style="left:565px;top:389px;width:40px;text-align:right;color:#8a8a8a;">44</div>
<div class="abs code" style="left:632px;top:389px"><span class="c">  // Extract domain from FQDN</span></div>
<div class="abs code" style="left:565px;top:407px;width:40px;text-align:right;color:#8a8a8a;">45</div>
<div class="abs code" style="left:632px;top:407px"><span class="k">  where</span> <span class="m">isPresent(</span><span class="v">device.system.hostNames)</span></div>
<div class="abs code" style="left:565px;top:425px;width:40px;text-align:right;color:#8a8a8a;">46</div>
<div class="abs code" style="left:632px;top:425px"><span class="k">  let</span> fqdn = <span class="m">max(</span><span class="v">device.system.hostNames)</span><span class="c">  // Get the FQDN</span></div>
<div class="abs code" style="left:565px;top:443px;width:40px;text-align:right;color:#8a8a8a;">47</div>
<div class="abs code" style="left:632px;top:443px"><span class="k">  where</span> <span class="m">isPresent(</span><span class="v">fqdn)</span><span class="c">  // Ensure fqdn is present before applying regex</span></div>
<div class="abs code" style="left:565px;top:461px;width:40px;text-align:right;color:#8a8a8a;">48</div>
<div class="abs code" style="left:632px;top:461px"><span class="c">  // Get the total amount </span><span class="m">of interfaces</span></div>
<div class="abs code" style="left:565px;top:479px;width:40px;text-align:right;color:#8a8a8a;">49</div>
<div class="abs code" style="left:632px;top:479px"><span class="k">  let</span> interfaceCount = <span class="m">length(</span><span class="v">device.interfaces)</span></div>
<div class="abs code" style="left:565px;top:497px;width:40px;text-align:right;color:#8a8a8a;">50</div>
<div class="abs code" style="left:632px;top:497px"><span class="k">  let</span> platform = device.platform</div>
<div class="abs code" style="left:565px;top:515px;width:40px;text-align:right;color:#8a8a8a;">51</div>
<div class="abs code" style="left:632px;top:515px"><span class="m">  let snapshotInfo</span> = device.snapshotInfo</div>
<div class="abs" style="left:819px;top:191px;width:1px;height:54px;background:#c2c4dc"></div>
<div class="abs" style="left:819px;top:299px;width:1px;height:36px;background:#c2c4dc"></div>
<div class="abs" style="left:565px;top:144px;width:1277px;height:18px;background:#fff;box-shadow:0 2px 3px rgba(0,0,0,.12)"></div>
<div class="abs" style="left:1722px;top:144px;width:120px;height:6px;background:linear-gradient(#ececec,rgba(255,255,255,0))"></div>
<div class="abs code" style="left:565px;top:144px;width:33px;text-align:right;color:#8a8a8a">30</div>
<div class="abs code" style="left:632px;top:144px"><span class="k">foreach</span> device <span class="k">in</span> network.devices</div>
</div></div>
<div class="abs" style="left:1842px;top:144px;width:14px;height:392px;background:#e3e3e3;border-left:1px solid #d6d6d6"></div>
<div class="abs" style="left:1843px;top:292px;width:13px;height:2px;background:#333"></div>
</div>


<!-- RESULTS -->
<div id="results">
<div class="hline" style="left:565px;top:536px;width:1291px;background:#dcdcdc"></div>
<div class="abs" style="left:565px;top:537px;width:1291px;height:79px;background:#f8f8f8"></div>
<div class="abs" style="left:573px;top:545px;font-size:14px;line-height:16px;color:#1f4f80">Results</div>
<div class="ind" style="left:565px;top:565px;width:62px;border-radius:2px"></div>
<div class="hline" style="left:627px;top:568px;width:1229px;background:#e0e0e0"></div>
<svg class="abs" style="left:1833px;top:547px" width="14" height="12" viewBox="0 0 14 12"><g fill="none" stroke="#2a6496" stroke-width="1.2"><path d="M1.5 1.5 L7 6 L12.5 1.5"/><path d="M1.5 5.5 L7 10 L12.5 5.5"/></g></svg>
<div class="abs" style="left:581px;top:577px;width:168px;height:32px;background:#fff;border:1px solid #8f8f8f;border-radius:3px"></div>
<div class="abs" style="left:590px;top:584px;font-size:16px;line-height:18px;color:#333;white-space:nowrap">Forward Networks</div>
<div class="abs" style="left:731px;top:591px;width:0;height:0;border-left:5px solid transparent;border-right:5px solid transparent;border-top:5px solid #333"></div>
<div class="abs" style="left:765px;top:577px;width:320px;height:32px;background:#fff;border:1px solid #8f8f8f;border-radius:3px"></div>
<div class="abs" style="left:774px;top:584px;font-size:15.6px;line-height:18px;color:#333;white-space:nowrap">2025-11-03 11:53:27 GMT-08:00 old de...</div>
<div class="abs" style="left:1066px;top:591px;width:0;height:0;border-left:5px solid transparent;border-right:5px solid transparent;border-top:5px solid #333"></div>
<svg class="abs" style="left:1100px;top:584px" width="18" height="18" viewBox="0 0 18 18"><circle cx="9" cy="9" r="7.6" fill="none" stroke="#1f5a8c" stroke-width="1.2"/><path d="M7 5.8 L12.2 9 L7 12.2 Z" fill="#1f5a8c"/></svg>
<div class="abs" style="left:1125px;top:585px;font-size:13.4px;line-height:16px;color:#2a6496">Execute</div>
<div class="abs" style="left:1190px;top:585px;font-size:14px;line-height:16px;color:#333">2 of 2 results</div>
<svg class="abs" style="left:1294px;top:584px" width="10" height="18" viewBox="0 0 10 18"><g fill="#1f5a8c"><circle cx="5" cy="2.8" r="1.9"/><circle cx="5" cy="9.2" r="1.9"/><circle cx="5" cy="15.6" r="1.9"/></g></svg>
<div class="hline" style="left:565px;top:616px;width:1291px;background:#e3e3e3"></div>
<div class="abs" style="left:597px;top:637px;font-size:14px;line-height:16px;color:#666">uplinkInterface</div>
<div class="abs" style="left:597px;top:668px;font-size:14px;line-height:16px;color:#a6a6a6;font-style:italic">Filter</div>
<div class="abs" style="left:589px;top:692px;width:284px;height:1px;background:#8a8a8a"></div>
<div class="abs" style="left:856px;top:674px;width:0;height:0;border-left:5px solid transparent;border-right:5px solid transparent;border-top:5px solid #333"></div>
<div class="abs" style="left:897px;top:637px;font-size:14px;line-height:16px;color:#666">gatewayInterface</div>
<div class="abs" style="left:897px;top:668px;font-size:14px;line-height:16px;color:#a6a6a6;font-style:italic">Filter</div>
<div class="abs" style="left:889px;top:692px;width:284px;height:1px;background:#8a8a8a"></div>
<div class="abs" style="left:1156px;top:674px;width:0;height:0;border-left:5px solid transparent;border-right:5px solid transparent;border-top:5px solid #333"></div>
<div class="abs" style="left:1197px;top:637px;font-size:14px;line-height:16px;color:#666">vrf</div>
<div class="abs" style="left:1197px;top:668px;font-size:14px;line-height:16px;color:#a6a6a6;font-style:italic">Filter</div>
<div class="abs" style="left:1189px;top:692px;width:284px;height:1px;background:#8a8a8a"></div>
<div class="abs" style="left:1456px;top:674px;width:0;height:0;border-left:5px solid transparent;border-right:5px solid transparent;border-top:5px solid #333"></div>
<div class="abs" style="left:1497px;top:637px;font-size:14px;line-height:16px;color:#666">vlan</div>
<div class="abs" style="left:1497px;top:668px;font-size:14px;line-height:16px;color:#a6a6a6;font-style:italic">Filter</div>
<div class="abs" style="left:1489px;top:692px;width:134px;height:1px;background:#8a8a8a"></div>
<div class="abs" style="left:1647px;top:637px;font-size:14px;line-height:16px;color:#666">connectionName</div>
<div class="abs" style="left:1647px;top:668px;font-size:14px;line-height:16px;color:#a6a6a6;font-style:italic">Filter</div>
<div class="abs" style="left:1639px;top:692px;width:201px;height:1px;background:#8a8a8a"></div>
<div class="abs" style="left:581px;top:709px;width:1259px;height:56px;background:#f2f2f2;border-radius:2px"></div>
<div class="abs" style="left:597px;top:729px;font-size:14px;line-height:16px;color:#333;white-space:nowrap;width:255px;overflow:hidden;">{deviceName:example-device, interfaceName:eth0}</div>
<div class="abs" style="left:856px;top:729px;font-size:14px;line-height:16px;color:#1f5a8c;font-weight:bold;letter-spacing:-0.5px">...</div>
<div class="abs" style="left:897px;top:729px;font-size:14px;line-height:16px;color:#333;white-space:nowrap;">null</div>
<div class="abs" style="left:1197px;top:729px;font-size:14px;line-height:16px;color:#9e9e9e;white-space:nowrap;">(no value)</div>
<div class="abs" style="left:1515px;top:729px;font-size:14px;line-height:16px;color:#333;white-space:nowrap;width:100px;overflow:hidden;text-align:right;">100</div>
<div class="abs" style="left:1647px;top:729px;font-size:14px;line-height:16px;color:#333;white-space:nowrap;">connection1</div>
<div class="abs" style="left:597px;top:785px;font-size:14px;line-height:16px;color:#333;white-space:nowrap;width:255px;overflow:hidden;">{deviceName:example-device, interfaceName:eth0}</div>
<div class="abs" style="left:856px;top:785px;font-size:14px;line-height:16px;color:#1f5a8c;font-weight:bold;letter-spacing:-0.5px">...</div>
<div class="abs" style="left:897px;top:785px;font-size:14px;line-height:16px;color:#333;white-space:nowrap;width:255px;overflow:hidden;">{deviceName:example-device-2, interfaceName:eth1}</div>
<div class="abs" style="left:1156px;top:785px;font-size:14px;line-height:16px;color:#1f5a8c;font-weight:bold;letter-spacing:-0.5px">...</div>
<div class="abs" style="left:1197px;top:785px;font-size:14px;line-height:16px;color:#333;white-space:nowrap;">default</div>
<div class="abs" style="left:1515px;top:785px;font-size:14px;line-height:16px;color:#333;white-space:nowrap;width:100px;overflow:hidden;text-align:right;">100</div>
<div class="abs" style="left:1647px;top:785px;font-size:14px;line-height:16px;color:#9e9e9e;white-space:nowrap;">(no value)</div>
<div class="abs" style="left:582px;top:1033px;width:1258px;height:15px;background:#fafafa;border-top:1px solid #e6e6e6;border-bottom:1px solid #e6e6e6"></div>
<div class="abs" style="left:585px;top:1037px;width:730px;height:8px;background:#c1c1c1;border-radius:4px"></div>
</div>
<!-- DOCS PANEL -->
<div class="panel" style="left:1872px;top:64px;width:32px;height:1000px;background:#fff"></div>
<div id="docs">
<div class="abs" style="left:1872px;top:64px;width:32px;height:32px;background:#f9f9f9;border-radius:4px 4px 0 0"></div>
<div class="hline" style="left:1872px;top:95px;width:32px;background:#e3e3e3"></div>
<svg class="abs" style="left:1881px;top:73px" width="14" height="14" viewBox="0 0 14 14"><g fill="none" stroke="#2a6496" stroke-width="1.2"><path d="M7 1.5 L2.5 7 L7 12.5"/><path d="M11 1.5 L6.5 7 L11 12.5"/></g></svg>
<div class="abs" style="left:1878px;top:504px;width:0;height:0"><div style="position:absolute;left:0;top:0;transform:rotate(-90deg);transform-origin:0 0;font-size:18px;line-height:20px;color:#7b2d86;white-space:nowrap">Data Model / Generate / Explain / Documentation</div></div>
<svg class="abs" style="left:1878px;top:511px" width="20" height="20" viewBox="0 0 20 20"><g fill="#8b4a93"><path d="M10.5 7 Q11.2 10.8 15 11.5 Q11.2 12.2 10.5 16 Q9.8 12.2 6 11.5 Q9.8 10.8 10.5 7 Z"/><circle cx="5.3" cy="8" r="1.3"/><circle cx="8.5" cy="5" r="1.1"/><circle cx="15" cy="5.5" r="0.9"/><circle cx="3.5" cy="14.5" r="1.2"/><circle cx="6" cy="17" r="0.7"/><circle cx="14" cy="8.5" r="0.6"/><circle cx="3" cy="5" r="0.6"/></g></svg>
</div>


</body></html>
